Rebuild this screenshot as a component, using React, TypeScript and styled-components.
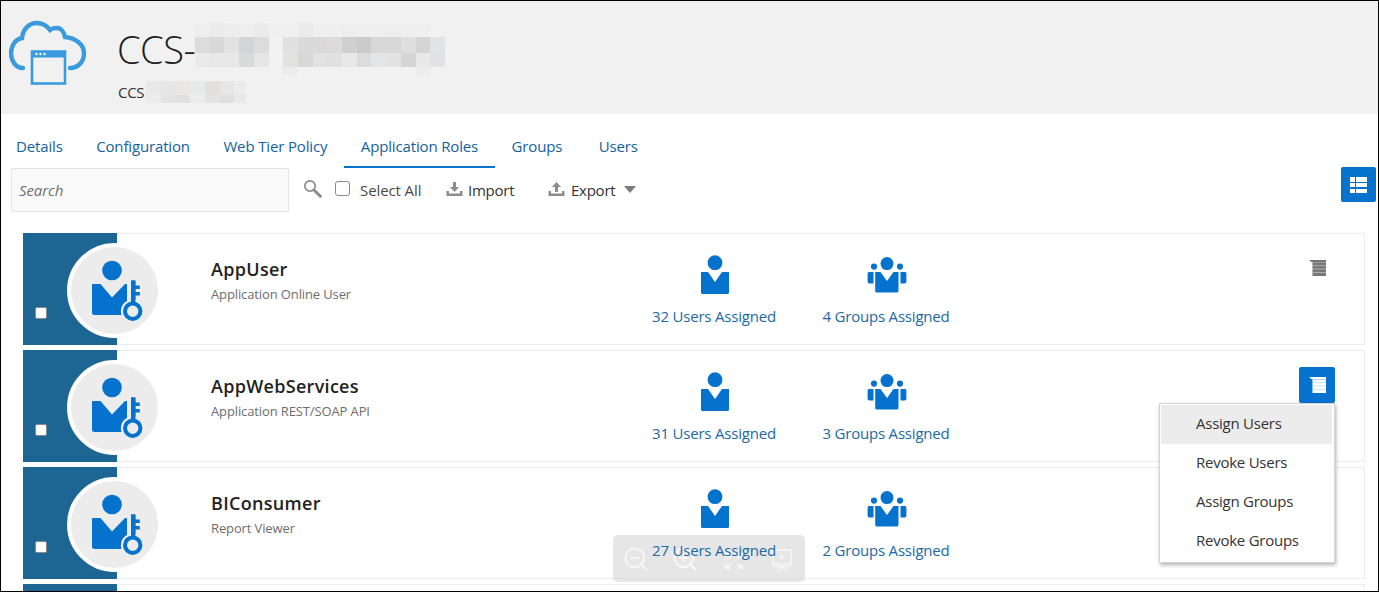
import React from "react";
import styled, { createGlobalStyle } from "styled-components";
import { ZoomIn, ZoomOut } from "lucide-react";

const Global = createGlobalStyle`
  html, body { margin: 0; padding: 0; background: #fff; }
  * { box-sizing: border-box; }
`;

const Frame = styled.div`
  position: relative;
  width: 1379px;
  height: 592px;
  overflow: hidden;
  border: 1px solid #000;
  background: #fff;
  font-family: "Open Sans", "Noto Sans", sans-serif;
`;

const Header = styled.header`
  height: 113px;
  background: #f1f1f1;
  display: flex;
  padding: 19px 0 0 8px;
`;
const LogoSlot = styled.div`
  width: 109px;
  flex: none;
`;
const Titles = styled.div`
  display: flex;
  flex-direction: column;
`;
const TitleLine = styled.div`
  display: flex;
  align-items: center;
  height: 58px;
`;
const Title = styled.span`
  flex: none;
  width: 78px;
  margin-left: -1px;
  font-size: 38px;
  font-weight: 300;
  line-height: 58px;
  letter-spacing: -0.5px;
  color: #1d1d1d;
`;
const SubLine = styled.div`
  display: flex;
  align-items: center;
  margin-top: 3px;
`;
const Sub = styled.span`
  flex: none;
  width: 28px;
  font-size: 15px;
  line-height: 22px;
  letter-spacing: -0.3px;
  color: #333;
`;

const Tabs = styled.nav`
  display: flex;
  height: 54px;
  padding-top: 14px;
  margin-left: -1.5px;
`;
const Tab = styled.div<{ $active?: boolean; $last?: boolean }>`
  padding: 0 17px 0 16.5px;
  margin-left: ${(p) => (p.$last ? "3px" : "0")};
  height: 40px;
  line-height: 36px;
  font-size: 15px;
  letter-spacing: -0.15px;
  white-space: nowrap;
  color: #145f9f;
  border-bottom: 2px solid ${(p) => (p.$active ? "#0572ce" : "transparent")};
`;

const Toolbar = styled.div`
  display: flex;
  align-items: flex-start;
  height: 65px;
  padding: 0 2px 0 10px;
`;
const SearchBox = styled.div`
  width: 278px;
  height: 44px;
  background: #fafafa;
  border: 1px solid #e4e4e4;
  border-radius: 2px;
  padding-left: 7px;
  line-height: 42px;
  font-size: 15px;
  font-style: italic;
  letter-spacing: -0.1px;
  color: #6f6f6f;
`;
const ToolRow = styled.div`
  display: flex;
  align-items: center;
  height: 44px;
`;
const SearchSlot = styled.div`
  display: flex;
  margin-left: 14px;
  margin-top: -4px;
  width: 32px;
`;
const BigCheck = styled.span`
  width: 15px;
  height: 15px;
  background: #fff;
  border: 1.5px solid #8a8a8a;
  border-radius: 3px;
  margin-top: -3px;
`;
const ToolLabel = styled.span<{ $dark?: boolean }>`
  font-size: 15px;
  letter-spacing: -0.25px;
  white-space: nowrap;
  color: ${(p) => (p.$dark ? "#333" : "#4a4a4a")};
`;
const SelectLabel = styled(ToolLabel)`
  margin-left: 10px;
  width: 86px;
  letter-spacing: -0.1px;
`;
const ExportLabel = styled(ToolLabel)`
  margin-left: 1px;
`;
const ToolIcon = styled.span`
  display: flex;
  margin-right: 5px;
  margin-top: -3px;
`;
const ImportGroup = styled.div`
  display: flex;
  align-items: center;
  width: 102px;
`;
const Caret = styled.span`
  width: 0;
  height: 0;
  margin-left: 9px;
  margin-top: -2px;
  border-left: 6px solid transparent;
  border-right: 6px solid transparent;
  border-top: 7px solid #7b7b7b;
`;
const ViewButton = styled.div`
  margin-left: auto;
  margin-top: -1px;
  width: 35px;
  height: 35px;
  border-radius: 2px;
  background: #0572ce;
  display: flex;
  align-items: center;
  justify-content: center;
`;

const List = styled.div`
  display: flex;
  flex-direction: column;
  gap: 5px;
  margin-left: 22px;
  width: 1342px;
`;
const Card = styled.article`
  position: relative;
  flex: none;
  display: flex;
  height: 112px;
  border: 1px solid #ececec;
  background: #fff;
`;
const Side = styled.div`
  position: relative;
  flex: none;
  width: 94px;
  margin: -1px 0 -1px -1px;
  background: #1d6593;
`;
const RowCheck = styled.span`
  position: absolute;
  left: 12px;
  top: 74px;
  width: 12px;
  height: 12px;
  background: #fff;
  border: 1px solid #8a8a8a;
  border-radius: 2px;
`;
const Avatar = styled.div`
  position: absolute;
  left: 44px;
  top: 10px;
  width: 95px;
  height: 95px;
  border-radius: 50%;
  background: #ececec;
  border: 4px solid #fff;
  display: flex;
  align-items: center;
  justify-content: center;
`;
const Info = styled.div`
  flex: none;
  width: 512px;
  padding: 23px 0 0 94px;
`;
const Name = styled.div`
  font-size: 18px;
  line-height: 24px;
  font-weight: 600;
  letter-spacing: 0.3px;
  color: #222;
`;
const Desc = styled.div`
  font-size: 13px;
  line-height: 18px;
  margin-top: 4px;
  letter-spacing: -0.12px;
  color: #6e6e6e;
`;
const Stat = styled.div<{ $gap?: boolean }>`
  flex: none;
  width: 170px;
  margin-left: ${(p) => (p.$gap ? "2px" : "0")};
  padding-top: 21px;
  display: flex;
  flex-direction: column;
  align-items: center;
`;
const StatIcon = styled.div`
  height: 40px;
  display: flex;
  align-items: flex-start;
  padding-left: 1px;
`;
const StatText = styled.div`
  position: relative;
  z-index: 7;
  margin-top: 10px;
  font-size: 15px;
  line-height: 22px;
  letter-spacing: -0.2px;
  white-space: nowrap;
  color: #1b69a6;
`;
const Actions = styled.div`
  position: relative;
  flex: 1;
  display: flex;
  justify-content: flex-end;
  padding: 16px 29px 0 0;
`;
const ActionButton = styled.div<{ $open?: boolean }>`
  width: 36px;
  height: 36px;
  border-radius: 2px;
  background: ${(p) => (p.$open ? "#0572ce" : "transparent")};
  display: flex;
  align-items: center;
  justify-content: center;
`;
const Menu = styled.div`
  position: absolute;
  z-index: 5;
  top: 52px;
  right: 29px;
  width: 176px;
  padding: 1px 2px 1px 1px;
  background: #fff;
  border: 1px solid #d4d4d4;
  box-shadow: 1px 2px 4px rgba(0, 0, 0, 0.3);
`;
const MenuItem = styled.div<{ $hover?: boolean }>`
  height: 39px;
  line-height: 37px;
  padding-left: 35px;
  font-size: 15px;
  letter-spacing: -0.25px;
  color: #333;
  background: ${(p) => (p.$hover ? "#ececec" : "transparent")};
`;

const ZoomBar = styled.div`
  position: absolute;
  z-index: 6;
  left: 612px;
  top: 534px;
  width: 192px;
  height: 47px;
  border-radius: 5px;
  background: rgba(205, 205, 205, 0.5);
  color: rgba(255, 255, 255, 0.62);
  display: flex;
  align-items: center;
  padding: 1px 0 0 9px;
  gap: 21px;
`;
const ExpandSlot = styled.span`
  display: flex;
  margin: 4px 0 0 4px;
`;
const ScreenSlot = styled.span`
  display: flex;
  margin: 2px 0 0 7px;
`;

const rows = [
  { name: "AppUser", desc: "Application Online User", users: 32, groups: 4 },
  { name: "AppWebServices", desc: "Application REST/SOAP API", users: 31, groups: 3, open: true },
  { name: "BIConsumer", desc: "Report Viewer", users: 27, groups: 2 },
  { name: "", desc: "", users: 0, groups: 0, blank: true },
];

const CloudLogo = () => (
  <svg width="80" height="70" viewBox="0 0 80 70" fill="none">
    <path
      d="M14 48 C6 48 2 40 2 33 C2 25 7 19 13 18 C14 9 20 3 28 3 C34 3 38 6 41 10 C43 8 46 8 48 8 C52 8 55 12 56 17 C66 18 75 24 75 33 C75 42 69 48 61 48"
      stroke="#3a9bdc"
      strokeWidth="4.4"
      strokeLinecap="round"
    />
    <rect x="23" y="31.5" width="33" height="32" fill="#f1f1f1" stroke="#3a9bdc" strokeWidth="2.6" />
    <rect x="23" y="31.5" width="33" height="6" fill="#3a9bdc" />
    <circle cx="27.5" cy="34" r="1.2" fill="#fff" />
    <circle cx="31.5" cy="34" r="1.2" fill="#fff" />
    <circle cx="35.5" cy="34" r="1.2" fill="#fff" />
  </svg>
);

const titleMosaic: (string | null)[][] = [
  ["#eeeeee", "#ececec", "#ededed", "#eeeeee", "#ebebeb", "#f0f0f0", "#f0f0f0", "#ebebeb", "#efefef", "#efefef", "#eeeeee", "#efefef", "#efefef", "#eeeeee", "#efefef", "#efefef", null],
  ["#dcdcdc", "#d8d8d8", "#e2e2e2", "#d2d4d6", "#dcdcdc", null, "#e0e0e0", "#dadada", "#d9d9d9", "#dcdada", "#cfcfcf", "#cbcbcb", "#d8d8d8", "#d8d8d8", "#dedede", "#d5d5d5", "#e2e3e5"],
  ["#eaeaea", "#e8e8e8", "#e8e8e8", "#d9dbdb", "#e6e6e6", null, "#e2e2e0", "#d8d8d8", "#e2e2e2", "#e0e0e0", "#e8e8e8", "#dcdcdc", "#e3e4e6", "#e2e2e2", "#d5d5d5", "#e8e8e8", "#e2e2e4"],
  [null, null, null, null, null, null, "#ececec", null, null, null, null, null, null, null, null, "#ececec", null],
];
const subMosaic: string[][] = [
  ["#e9e9e9", "#e6e6e6", "#e9e7e6", "#e8e9e9", "#e2e0df", "#e6e6e6", "#ebebeb"],
  ["#ececec", "#e4e4e4", "#e0e0e0", "#ececec", "#e3e3e3", "#dfdfdf", "#e8e8e8"],
];

const Mosaic = ({ cells, w, h, rowH }: { cells: (string | null)[][]; w: number; h: number; rowH: number[] }) => {
  let y = 0;
  return (
    <svg width={w} height={h} viewBox={`0 0 ${w} ${h}`} shapeRendering="crispEdges">
      {cells.map((r, i) => {
        const top = y;
        y += rowH[i];
        return r.map((c, j) =>
          c ? <rect key={`${i}-${j}`} x={j * 14.7} y={top} width={14.7} height={rowH[i]} fill={c} /> : null
        );
      })}
    </svg>
  );
};

const Person = () => (
  <svg width="28" height="40" viewBox="0 0 28 40" fill="#0572ce">
    <circle cx="14" cy="7.7" r="7.4" />
    <path d="M0 17 H7 L14 27 L21 17 H28 V37.5 Q28 39 26.5 39 H1.5 Q0 39 0 37.5 Z" />
  </svg>
);

const Group = () => (
  <svg width="40" height="40" viewBox="0 -2 40 40" fill="#0572ce">
    <circle cx="20" cy="6.6" r="6.5" />
    <circle cx="7" cy="9.6" r="3.1" />
    <circle cx="33" cy="9.6" r="3.1" />
    <path d="M8.2 15 H13.5 L20 24 L26.5 15 H31.5 V34 Q31.5 35.4 30 35.4 H9.7 Q8.2 35.4 8.2 34 Z" />
    <path d="M2 15 H6.5 V26.5 H2.5 Q0.6 26.5 0.6 24.6 V16.5 Q0.6 15 2 15 Z" />
    <path d="M33.5 15 H38 Q39.4 15 39.4 16.5 V24.6 Q39.4 26.5 37.5 26.5 H33.5 Z" />
  </svg>
);

const RoleIcon = () => (
  <svg width="56" height="62" viewBox="-4 0 56 62">
    <g fill="#0572ce">
      <circle cx="21" cy="10.5" r="9.8" />
      <path d="M2 24 H9.5 L21 37.5 L34 24 H36 V44 H32 V55 H3.5 Q1 55 1 52.5 V25 Q1 24 2 24 Z" />
      <path d="M40 20.5 H44.4 V25.5 H48.8 V29 H44.4 V32 H48.8 V35.5 H44.4 V44 H40 Z" />
    </g>
    <circle cx="41.7" cy="51.2" r="11.8" fill="#ececec" />
    <path d="M40 20.5 H44.4 V44 H40 Z" fill="#0572ce" />
    <circle cx="41.7" cy="51.2" r="7.7" fill="none" stroke="#0572ce" strokeWidth="4" />
  </svg>
);

const ScrollIcon = ({ open }: { open?: boolean }) => {
  const main = open ? "#fff" : "#777";
  const soft = open ? "#cfe3f5" : "#a9a9a9";
  return (
    <svg width="17" height="16" viewBox="0 0 17 16">
      <path d="M0 0 H17 V2.6 H3 Z" fill={main} />
      <rect x="3.5" y="2.6" width="13.5" height="13.4" fill={main} />
      <rect x="3.5" y="5" width="13.5" height="1.1" fill={soft} />
      <rect x="3.5" y="8.5" width="13.5" height="1.1" fill={soft} />
      <rect x="3.5" y="12" width="13.5" height="1.1" fill={soft} />
    </svg>
  );
};

const ListIcon = () => (
  <svg width="17" height="16" viewBox="0 0 17 16" fill="#fff" shapeRendering="crispEdges">
    <rect x="0" y="0" width="4.5" height="4.5" />
    <rect x="6" y="0" width="11" height="4.5" />
    <rect x="0" y="5.8" width="4.5" height="4.5" />
    <rect x="6" y="5.8" width="11" height="4.5" />
    <rect x="0" y="11.5" width="4.5" height="4.5" />
    <rect x="6" y="11.5" width="11" height="4.5" />
  </svg>
);

const SearchGlyph = () => (
  <svg width="19" height="19" viewBox="0 0 19 19" fill="none" stroke="#8c8c8c">
    <circle cx="7" cy="7" r="5.2" strokeWidth="1.7" />
    <path d="M11 11 L17.3 17.3" strokeWidth="3" strokeLinecap="round" />
  </svg>
);

const Tray = ({ up }: { up?: boolean }) => (
  <svg width="17" height="16" viewBox="0 0 17 16" fill="#8c8c8c">
    <path d="M0.5 10 H3 V12.5 H14 V10 H16.5 V15 H0.5 Z" />
    {up ? <path d="M8.5 1 L13 6 H10 V11 H7 V6 H4 Z" /> : <path d="M8.5 11 L13 6 H10 V1 H7 V6 H4 Z" />}
  </svg>
);

const ExpandGlyph = () => (
  <svg width="20" height="18" viewBox="0 0 20 18" fill="none" stroke="currentColor" strokeWidth="2">
    <path d="M2 6 V2 H6 M2 2 L7 6.5 M18 6 V2 H14 M18 2 L13 6.5 M2 12 V16 H6 M2 16 L7 11.5 M18 12 V16 H14 M18 16 L13 11.5" />
  </svg>
);

const ScreenGlyph = () => (
  <svg width="20" height="23" viewBox="0 0 20 23" fill="none" stroke="currentColor" strokeWidth="1.6">
    <rect x="1" y="1" width="18" height="14" />
    <path d="M8 5 L13 8 L8 11 Z" fill="currentColor" stroke="none" />
    <path d="M1 17.5 H19 M10 16 V18 M10 18 L5 22 M10 18 L15 22" />
  </svg>
);

export default function App() {
  return (
    <Frame>
      <Global />
      <Header>
        <LogoSlot>
          <CloudLogo />
        </LogoSlot>
        <Titles>
          <TitleLine>
            <Title>CCS-</Title>
            <Mosaic cells={titleMosaic} w={250} h={52} rowH={[14, 16, 14, 8]} />
          </TitleLine>
          <SubLine>
            <Sub>CCS</Sub>
            <Mosaic cells={subMosaic} w={100} h={22} rowH={[14, 8]} />
          </SubLine>
        </Titles>
      </Header>
      <Tabs>
        <Tab>Details</Tab>
        <Tab>Configuration</Tab>
        <Tab>Web Tier Policy</Tab>
        <Tab $active>Application Roles</Tab>
        <Tab>Groups</Tab>
        <Tab $last>Users</Tab>
      </Tabs>
      <Toolbar>
        <SearchBox>Search</SearchBox>
        <ToolRow>
          <SearchSlot>
            <SearchGlyph />
          </SearchSlot>
          <BigCheck />
          <SelectLabel>Select All</SelectLabel>
          <ImportGroup>
            <ToolIcon>
              <Tray />
            </ToolIcon>
            <ToolLabel $dark>Import</ToolLabel>
          </ImportGroup>
          <ToolIcon>
            <Tray up />
          </ToolIcon>
          <ExportLabel $dark>Export</ExportLabel>
          <Caret />
        </ToolRow>
        <ViewButton>
          <ListIcon />
        </ViewButton>
      </Toolbar>
      <List>
        {rows.map((r, i) => (
          <Card key={i}>
            <Side>
              {!r.blank && <RowCheck />}
              {!r.blank && (
                <Avatar>
                  <RoleIcon />
                </Avatar>
              )}
            </Side>
            {!r.blank && (
              <>
                <Info>
                  <Name>{r.name}</Name>
                  <Desc>{r.desc}</Desc>
                </Info>
                <Stat>
                  <StatIcon>
                    <Person />
                  </StatIcon>
                  <StatText>{r.users} Users Assigned</StatText>
                </Stat>
                <Stat $gap>
                  <StatIcon>
                    <Group />
                  </StatIcon>
                  <StatText>{r.groups} Groups Assigned</StatText>
                </Stat>
                <Actions>
                  {i < 2 && (
                    <ActionButton $open={r.open}>
                      <ScrollIcon open={r.open} />
                    </ActionButton>
                  )}
                  {r.open && (
                    <Menu>
                      <MenuItem $hover>Assign Users</MenuItem>
                      <MenuItem>Revoke Users</MenuItem>
                      <MenuItem>Assign Groups</MenuItem>
                      <MenuItem>Revoke Groups</MenuItem>
                    </Menu>
                  )}
                </Actions>
              </>
            )}
          </Card>
        ))}
      </List>
      <ZoomBar>
        <ZoomOut size={28} strokeWidth={1.8} />
        <ZoomIn size={28} strokeWidth={1.8} />
        <ExpandSlot>
          <ExpandGlyph />
        </ExpandSlot>
        <ScreenSlot>
          <ScreenGlyph />
        </ScreenSlot>
      </ZoomBar>
    </Frame>
  );
}
